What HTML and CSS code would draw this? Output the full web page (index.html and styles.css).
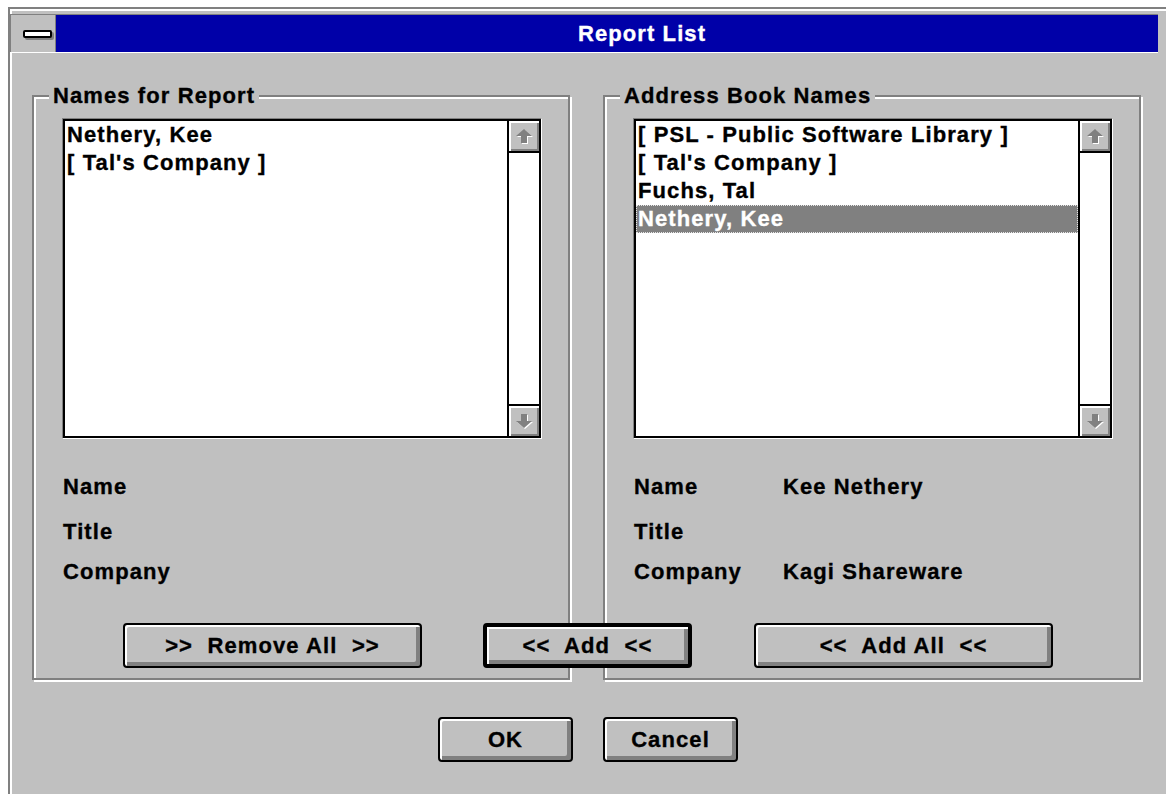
FILE: index.html
```html
<!DOCTYPE html>
<html lang="en">
<head>
<meta charset="utf-8">
<title>Report List</title>
<link rel="stylesheet" href="styles.css">
</head>
<body>
<div class="window">
  <div class="titlebar">
    <div class="sysmenu"><span class="sysmenu-bar"></span></div>
    <div class="caption">Report List</div>
  </div>
  <div class="client">
    <div class="panels">
      <section class="group group-left">
        <div class="group-title">Names for Report</div>
        <div class="listbox">
          <div class="listbox-frame">
            <ul class="items">
              <li>Nethery, Kee</li>
              <li>[ Tal's Company ]</li>
            </ul>
            <div class="vscroll">
              <div class="sbtn"><svg width="18" height="16" viewBox="0 0 18 16"><polygon points="9,1 17,8 12,8 12,15 6,15 6,8 1,8" fill="#fff" transform="translate(1,1)"/><polygon points="9,1 17,8 12,8 12,15 6,15 6,8 1,8" fill="#808080"/></svg></div>
              <div class="track"></div>
              <div class="sbtn down"><svg width="18" height="16" viewBox="0 0 18 16"><polygon points="6,1 12,1 12,8 17,8 9,15 1,8 6,8" fill="#fff" transform="translate(1,1)"/><polygon points="6,1 12,1 12,8 17,8 9,15 1,8 6,8" fill="#808080"/></svg></div>
            </div>
          </div>
        </div>
        <dl class="details">
          <dt>Name</dt><dd></dd>
          <dt>Title</dt><dd></dd>
          <dt>Company</dt><dd></dd>
        </dl>
      </section>
      <section class="group group-right">
        <div class="group-title">Address Book Names</div>
        <div class="listbox">
          <div class="listbox-frame">
            <ul class="items">
              <li>[ PSL - Public Software Library ]</li>
              <li>[ Tal's Company ]</li>
              <li>Fuchs, Tal</li>
              <li class="selected">Nethery, Kee</li>
            </ul>
            <div class="vscroll">
              <div class="sbtn"><svg width="18" height="16" viewBox="0 0 18 16"><polygon points="9,1 17,8 12,8 12,15 6,15 6,8 1,8" fill="#fff" transform="translate(1,1)"/><polygon points="9,1 17,8 12,8 12,15 6,15 6,8 1,8" fill="#808080"/></svg></div>
              <div class="track"></div>
              <div class="sbtn down"><svg width="18" height="16" viewBox="0 0 18 16"><polygon points="6,1 12,1 12,8 17,8 9,15 1,8 6,8" fill="#fff" transform="translate(1,1)"/><polygon points="6,1 12,1 12,8 17,8 9,15 1,8 6,8" fill="#808080"/></svg></div>
            </div>
          </div>
        </div>
        <dl class="details">
          <dt>Name</dt><dd>Kee Nethery</dd>
          <dt>Title</dt><dd></dd>
          <dt>Company</dt><dd>Kagi Shareware</dd>
        </dl>
      </section>
      <div class="actions">
        <button class="btn btn-wide">&gt;&gt;&nbsp; Remove All &nbsp;&gt;&gt;</button>
        <button class="btn btn-add">&lt;&lt;&nbsp; Add &nbsp;&lt;&lt;</button>
        <button class="btn btn-wide">&lt;&lt;&nbsp; Add All &nbsp;&lt;&lt;</button>
      </div>
    </div>
    <div class="dialog-buttons">
      <button class="btn btn-dlg">OK</button>
      <button class="btn btn-dlg">Cancel</button>
    </div>
  </div>
</div>
</body>
</html>
```

FILE: styles.css
```css
* { box-sizing: border-box; }

html, body {
  margin: 0;
  padding: 0;
  background: #fff;
  overflow: hidden;
}

body {
  width: 1166px;
  height: 794px;
  font-family: "Liberation Sans", Arial, sans-serif;
  font-weight: bold;
  font-size: 22px;
  letter-spacing: 1.1px;
  color: #000;
  -webkit-text-stroke: 0.35px currentColor;
}

/* dialog frame */
.window {
  margin: 7px 0 0 8px;
  width: 1158px;
  height: 787px;
  overflow: hidden;
  padding-top: 5px;
  background: #c0c0c0;
  border-top: 2px solid #808080;
  border-left: 2px solid #808080;
  box-shadow: inset 2px 2px #fff;
}

.titlebar {
  display: flex;
  width: 1148px;
  height: 39px;
  border-top: 1px solid #808080;
  border-bottom: 1px solid #fff;
}

.sysmenu {
  width: 46px;
  display: flex;
  align-items: center;
  padding-left: 12px;
  background: #c0c0c0;
  border-left: 1px solid #808080;
  border-right: 1px solid #808080;
}

.sysmenu-bar {
  display: block;
  width: 29px;
  height: 8px;
  background: #fff;
  border: 2px solid #000;
  border-radius: 2px;
  box-shadow: 2px 2px 0 #808080;
}

.caption {
  flex: 1;
  background: #0000a8;
  color: #fff;
  text-align: center;
  line-height: 37px;
  padding-left: 70px;
}

/* client area */
.client {
  padding-left: 22px;
}

.panels {
  display: grid;
  grid-template-columns: 538px 538px;
  column-gap: 33px;
  margin-top: 42px;
  width: 1109px;
}

.group {
  grid-row: 1;
  height: 585px;
  border: 2px solid #808080;
  box-shadow: inset 2px 2px #fff, 2px 2px #fff;
}

.group-left { grid-column: 1; }
.group-right { grid-column: 2; }

.group-title {
  width: max-content;
  margin: -14px 0 0 15px;
  padding: 0 4px;
  line-height: 26px;
  background: #c0c0c0;
}

/* list box */
.listbox {
  margin: 9px 0 0 28px;
  width: 480px;
  height: 321px;
  border: 1px solid;
  border-color: #808080 #fff #fff #808080;
}

.listbox-frame {
  display: flex;
  height: 100%;
  border: 2px solid #000;
  background: #fff;
}

.items {
  flex: 1;
  list-style: none;
  margin: 0;
  padding: 0;
}

.items li {
  line-height: 28px;
  padding-left: 2px;
  white-space: nowrap;
}

.items li.selected {
  background: #808080;
  color: #fff;
  outline: 1px dotted #e8e8e8;
  outline-offset: -1px;
}

.vscroll {
  width: 32px;
  display: flex;
  flex-direction: column;
  border-left: 2px solid #000;
}

.sbtn {
  height: 32px;
  display: flex;
  align-items: center;
  justify-content: center;
  background: #c0c0c0;
  border-bottom: 2px solid #000;
  box-shadow: inset 2px 2px #fff, inset -2px -2px #808080;
}

.sbtn.down {
  border-bottom: 0;
  border-top: 2px solid #000;
}

.track { flex: 1; }

/* name / title / company */
.details {
  margin: 35px 0 0 29px;
  display: grid;
  grid-template-columns: 149px auto;
  grid-template-rows: 45px 40px 26px;
  line-height: 26px;
}

.details dt,
.details dd {
  margin: 0;
}

/* push buttons */
.btn {
  height: 45px;
  padding: 0;
  display: flex;
  align-items: center;
  justify-content: center;
  font: inherit;
  letter-spacing: inherit;
  color: #000;
  background: #c0c0c0;
  border: 2px solid #000;
  border-radius: 4px;
  box-shadow: inset 2px 2px #fff, inset -4px -4px #808080;
  white-space: nowrap;
  line-height: 26px;
}

.actions {
  grid-row: 1;
  grid-column: 1 / -1;
  align-self: end;
  margin-bottom: 12px;
  display: flex;
  padding-left: 91px;
}

.btn-wide { width: 299px; }

.btn-add {
  width: 209px;
  margin: 0 62px 0 61px;
  border-width: 4px;
}

.dialog-buttons {
  display: flex;
  gap: 30px;
  margin-top: 37px;
  padding-left: 406px;
}

.btn-dlg { width: 135px; }
```
